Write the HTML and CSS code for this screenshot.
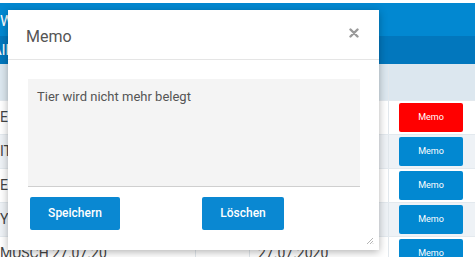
FILE: index.html
```html
<!DOCTYPE html>
<html lang="de">
	<head>
		<meta charset="UTF-8">
		<title>Memo</title>
		<link rel="stylesheet" href="styles.css">
	</head>
	<body>
		<div class="page">
			<div class="topbar"><span>Willkommen</span></div>
			<div class="subbar"><span>Alle Tiere</span></div>
			<div class="table">
				<div class="row head">
					<p class="c1"></p><p class="c2"></p><p class="c3"></p><p class="c4"></p>
				</div>
				<div class="row">
					<p class="c1">EP</p><p class="c2"></p><p class="c3"></p>
					<p class="c4"><a class="memo red">Memo</a></p>
				</div>
				<div class="row alt">
					<p class="c1">IT</p><p class="c2"></p><p class="c3"></p>
					<p class="c4"><a class="memo">Memo</a></p>
				</div>
				<div class="row">
					<p class="c1">EP</p><p class="c2"></p><p class="c3"></p>
					<p class="c4"><a class="memo">Memo</a></p>
				</div>
				<div class="row alt">
					<p class="c1">Y</p><p class="c2"></p><p class="c3"></p>
					<p class="c4"><a class="memo">Memo</a></p>
				</div>
				<div class="row">
					<p class="c1">MUSCH 27.07.20</p><p class="c2"></p><p class="c3">27.07.2020</p>
					<p class="c4"><a class="memo">Memo</a></p>
				</div>
			</div>
		</div>

		<!-- Memo Dialog -->
		<div class="modal">
			<div class="modal-head">
				<h4>Memo</h4>
				<svg class="close" width="10" height="10" viewBox="0 0 10 10">
					<path d="M1.5 1.5L8.5 8.5M8.5 1.5L1.5 8.5" stroke="#9a9a9a" stroke-width="2.4" stroke-linecap="round"/>
				</svg>
			</div>
			<div class="modal-body">
				<div class="memo-text">Tier wird nicht mehr belegt</div>
				<div class="btns">
					<a class="btn save">Speichern</a>
					<a class="btn del">Löschen</a>
				</div>
			</div>
			<svg class="grip" width="8" height="8" viewBox="0 0 8 8">
				<path d="M7 1L1 7M7 4L4 7M7 6.5L6.5 7" stroke="#b5b5b5" stroke-width="1"/>
			</svg>
		</div>
	</body>
</html>
```
FILE: styles.css
```css
* {
	margin: 0;
	padding: 0;
	box-sizing: border-box;
}

html, body {
	width: 100%;
	height: 100%;
	overflow: hidden;
	position: relative;
	background: #fff;
	font-family: Roboto, "Liberation Sans", sans-serif;
}

a {
	text-decoration: none;
	color: #fff;
}

.page {
	padding-top: 3px;
}

/*kopf*/
.topbar {
	height: 33px;
	padding-top: 3px;
	background: #0288d1;
	color: #fff;
	font-size: 15px;
	line-height: 30px;
	white-space: nowrap;
	overflow: hidden;
}

.subbar {
	height: 28px;
	background: #0277bd;
	color: #fff;
	font-size: 15px;
	line-height: 28px;
	white-space: nowrap;
	overflow: hidden;
}

.subbar span {
	display: inline-block;
	margin-left: -8px;
}

/*tabelle*/
.table {
	width: 100%;
}

.row {
	display: grid;
	grid-template-columns: 196px 54px 139px 86px;
	height: 34px;
	background: #fff;
	border-bottom: 1px solid #e3e9ee;
}

.row.head {
	height: 37px;
	background: #dce7ef;
}

.row.alt {
	background: #eef2f6;
}

.row p {
	border-right: 1px solid #e1e7ec;
	font-size: 14px;
	color: #444;
	line-height: 33px;
	white-space: nowrap;
	overflow: hidden;
}

.row p.c4 {
	border-right: none;
	padding: 2px 0 0 10px;
}

.row .c3 {
	padding-left: 8px;
}

.memo {
	display: block;
	width: 64px;
	height: 29px;
	line-height: 29px;
	border-radius: 2px;
	background: #0288d1;
	font-size: 9px;
	text-align: center;
}

.memo.red {
	background: #ff0000;
}

/*dialog*/
.modal {
	position: absolute;
	left: 8px;
	top: 10px;
	width: 371px;
	height: 240px;
	background: #fff;
	box-shadow: 0 2px 8px rgba(0, 0, 0, 0.3);
}

.modal-head {
	height: 50px;
	border-bottom: 1px solid #e5e5e5;
	display: flex;
	align-items: center;
	justify-content: space-between;
	padding: 3px 20px 0 18px;
}

.modal-head h4 {
	font-size: 16px;
	font-weight: normal;
	color: #555;
}

.modal-head .close {
	margin-top: -6px;
}

.modal-body {
	padding: 19px 19px 0 20px;
}

.memo-text {
	height: 108px;
	background: #f4f4f4;
	border-bottom: 1px solid #cfcfcf;
	padding: 10px 9px;
	font-size: 13px;
	color: #555;
}

.btns {
	display: flex;
	gap: 82px;
	margin-top: 10px;
	padding-left: 2px;
}

.btn {
	display: block;
	height: 33px;
	line-height: 33px;
	background: #0a88d2;
	border-radius: 2px;
	font-size: 12px;
	font-weight: 500;
	text-align: center;
}

.btn.save {
	width: 90px;
}

.btn.del {
	width: 82px;
}

.grip {
	position: absolute;
	right: 5px;
	bottom: 5px;
}
```
